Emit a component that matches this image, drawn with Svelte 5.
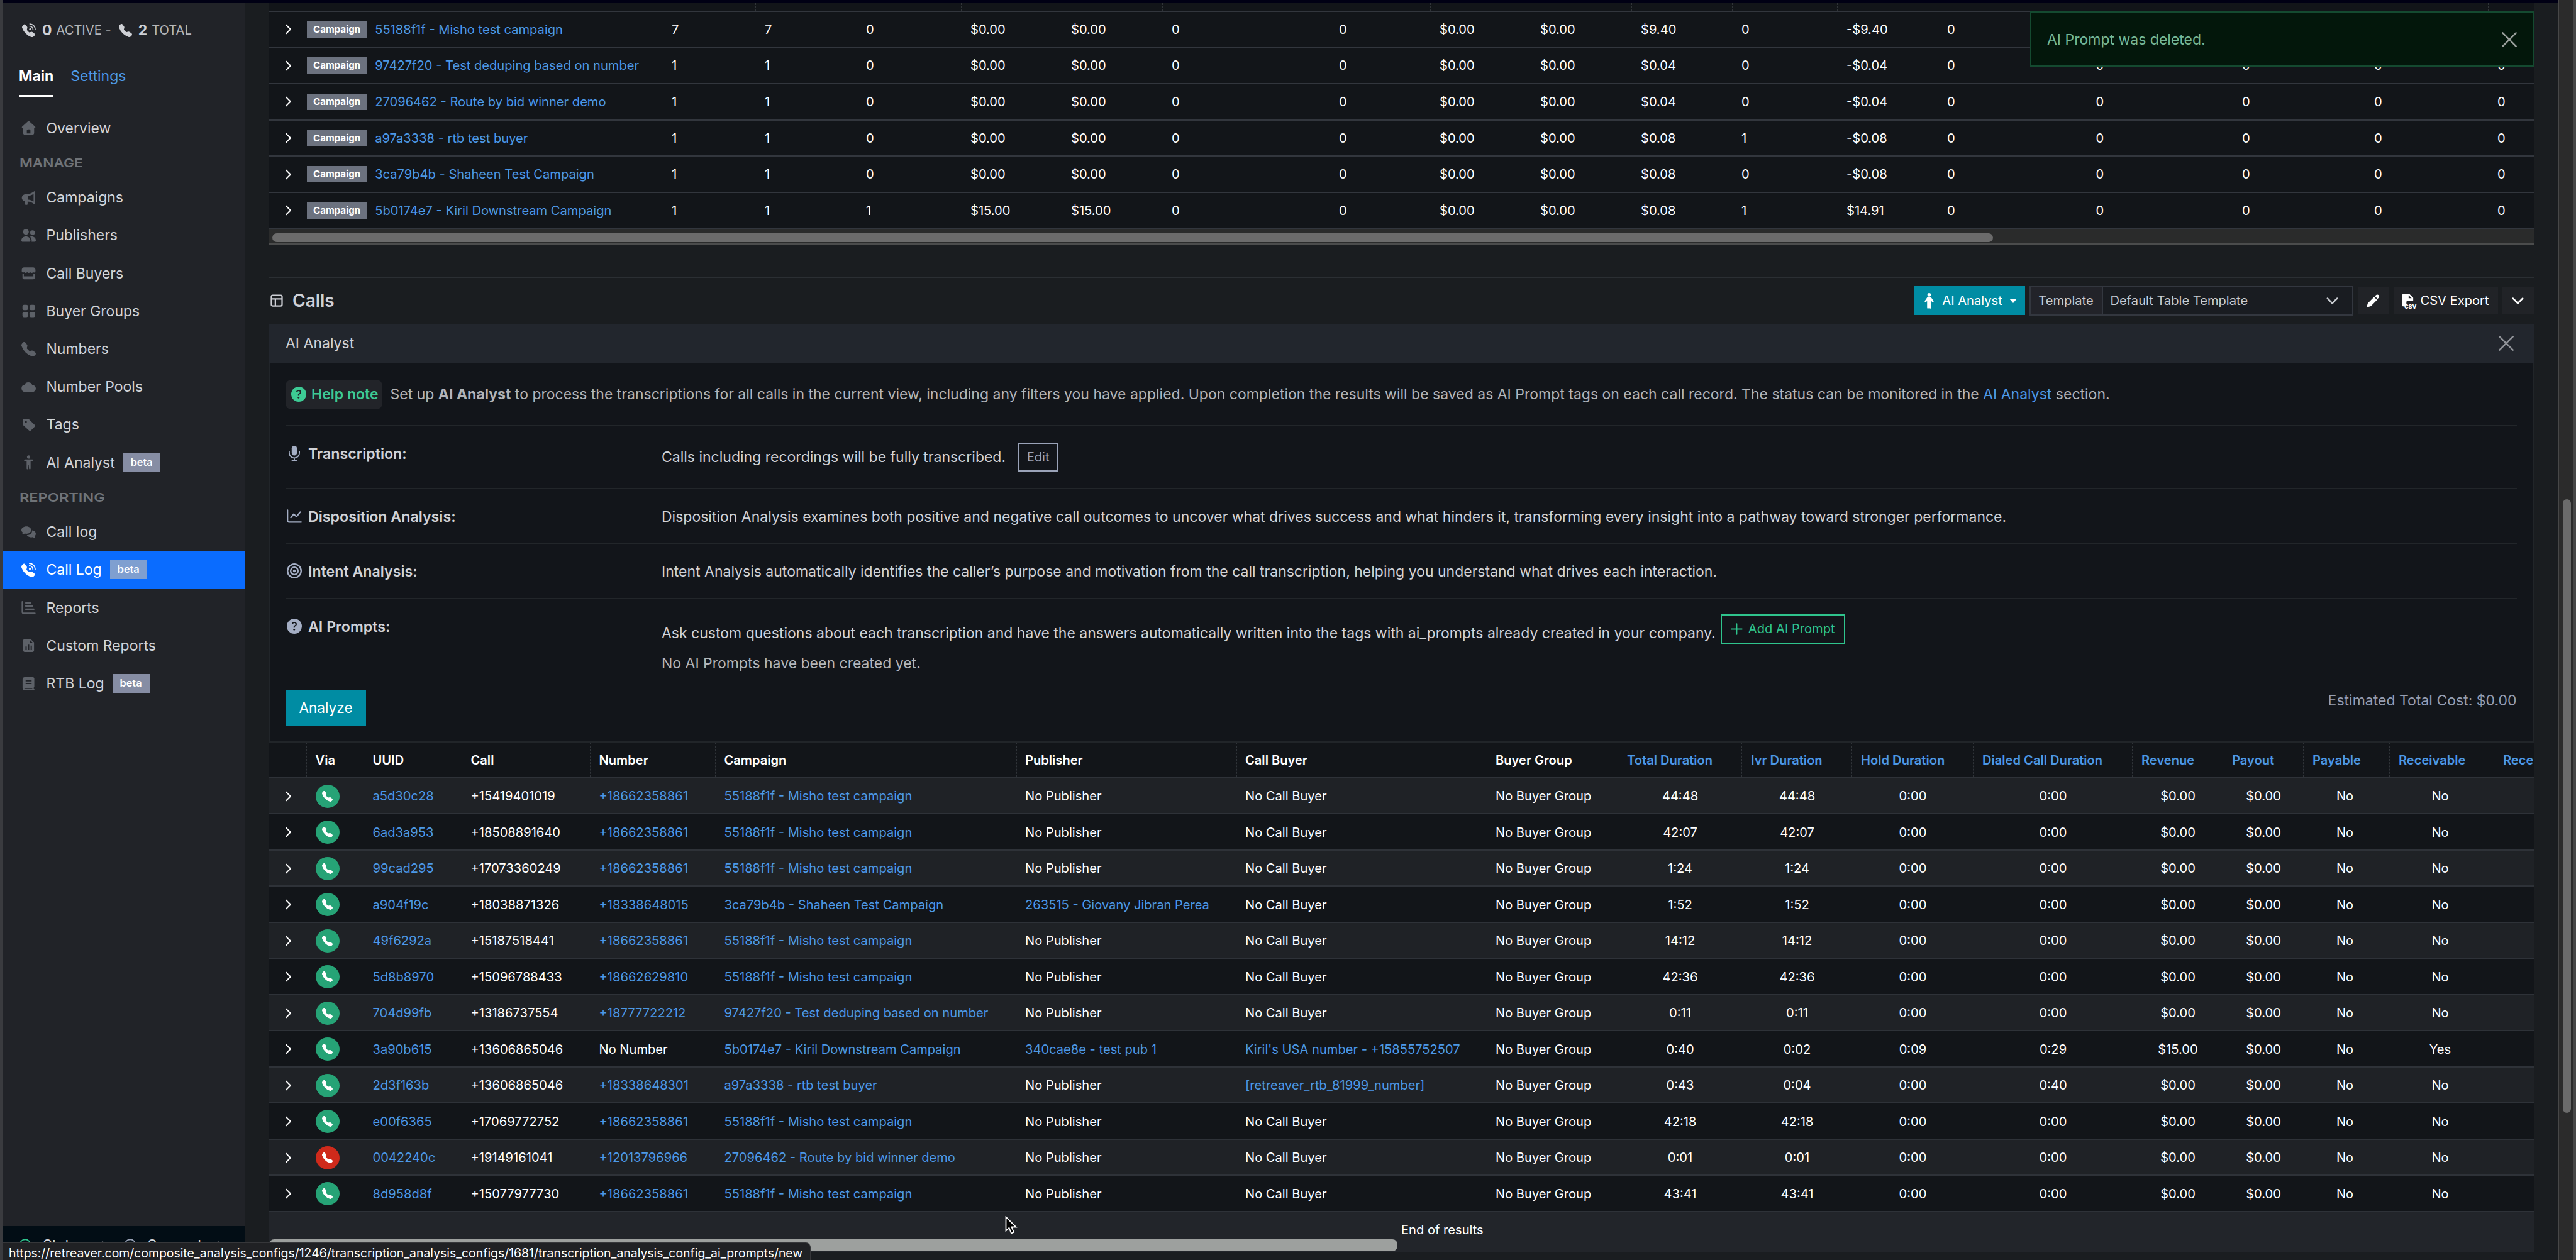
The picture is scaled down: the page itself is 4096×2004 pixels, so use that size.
<script>
  const phone = '<path d="M1.885.511a1.745 1.745 0 0 1 2.61.163L6.29 2.98c.329.423.445.974.315 1.494l-.547 2.19a.68.68 0 0 0 .178.643l2.457 2.457a.68.68 0 0 0 .644.178l2.189-.547a1.75 1.75 0 0 1 1.494.315l2.306 1.794c.829.645.905 1.87.163 2.611l-1.034 1.034c-.74.74-1.846 1.065-2.877.702a18.6 18.6 0 0 1-7.01-4.42 18.6 18.6 0 0 1-4.42-7.009c-.362-1.03-.037-2.137.703-2.877z"/>';

  // all icons are drawn on a 16x16 grid
  const icons = {
    phone,
    phoneWaves: `<g transform="translate(0 1.2) scale(.93)">${phone}</g><g fill="none" stroke="currentColor" stroke-width="1.2" stroke-linecap="round"><path d="M9 .8a6.4 6.4 0 0 1 6.3 6.3"/><path d="M8.9 3.4a3.9 3.9 0 0 1 3.8 3.8"/></g><circle cx="9.4" cy="6.8" r="1.1"/>`,
    home: '<path fill-rule="evenodd" d="M7.2.7a1.2 1.2 0 0 1 1.6 0l6.3 5.7c.8.7.3 1.9-.7 1.9h-.3v5.2c0 1.1-.8 2-1.9 2H3.8c-1.1 0-1.9-.9-1.9-2V8.3h-.3c-1 0-1.5-1.2-.7-1.9zM6 14h4v-3.2a1.3 1.3 0 0 0-1.3-1.3H7.300a1.300 1.300 0 0 0-1.300 1.300z"/>',
    megaphone: '<path fill-rule="evenodd" d="M14.700.700c.400 0 .600.300.600.700v13.200c0 .500-.600.900-1.100.600-2-1.600-3.700-2.700-7.300-3v2.700c0 .600-.400 1-1 1H5c-.500 0-.900-.400-.900-.900v-3C2.200 11.700.500 10.200.500 8s1.700-3.900 3.900-3.900c4.700 0 7.500-1.500 9.700-3.200zM13.500 3.900C11.600 5 9.700 5.700 7.500 5.900v4.200c2.200.200 4.100.900 6 2z"/>',
    people: '<circle cx="5" cy="4" r="3.200"/><circle cx="12.300" cy="4.800" r="2.600"/><path d="M0 13.500C0 10.700 2.200 9 5 9s5 1.700 5 4.500c0 .900-.600 1.500-1.500 1.500h-7C.600 15 0 14.400 0 13.500zM11.300 15c.400-2.400-.300-4.300-1.700-5.600 3.200-1 6.400.800 6.400 4.100 0 .900-.600 1.500-1.500 1.500z"/>',
    shop: '<path d="M3 1.500h10c1.500 0 2.600 1.200 2.600 2.800v1.500c0 1.300-1.700 2-2.600.9-.9 1.200-2.400 1.200-3.300 0-.9 1.200-2.400 1.200-3.300 0-.900 1.200-2.500 1.200-3.400 0C2.100 7.800.400 7.100.400 5.800V4.300C.400 2.700 1.500 1.500 3 1.500zM1.200 9h1.500v2.500h10.600V9h1.500v4c0 1-.8 1.700-1.700 1.700H2.900C2 14.700 1.200 14 1.200 13z"/>',
    grid: '<rect x="1.200" y="1.200" width="6" height="6" rx="1.600"/><rect x="9" y="1.200" width="6" height="6" rx="1.600"/><rect x="1.200" y="9" width="6" height="6" rx="1.600"/><rect x="9" y="9" width="6" height="6" rx="1.600"/>',
    cloud: '<path d="M4 13.500a4 4 0 0 1-.700-7.900A4.700 4.700 0 0 1 12 5.700a3.900 3.900 0 0 1 .200 7.800z"/>',
    tag: '<path fill-rule="evenodd" d="M1.500 3.200C1.500 2.300 2.200 1.600 3.100 1.600h4.200c.500 0 .9.200 1.200.500l6 5.900c.700.700.700 1.700 0 2.400l-3.800 3.800c-.700.700-1.700.700-2.400 0L2 8.500c-.300-.300-.500-.700-.500-1.200zM4.900 3.700a1.200 1.200 0 1 0 0 2.400 1.200 1.200 0 0 0 0-2.400z"/>',
    person: '<circle cx="8" cy="2" r="1.800"/><path d="M4 4.700h8a.9.9 0 0 1 .2 1.800l-2 .5v7.700a.9.9 0 0 1-1.800.100L8.200 10.600h-.4l-.2 4.200a.9.9 0 0 1-1.800-.100V7l-2-.5A.9.9 0 0 1 4 4.700z"/>',
    man: '<circle cx="8" cy="1.800" r="1.800"/><path d="M6.200 4.100h3.600L12.400 8a.9.900 0 0 1-1.500 1l-.8-1.100V15a.9.9 0 0 1-1.800 0v-4.300h-.6V15a.9.9 0 0 1-1.800 0V7.900L5.100 9a.9.9 0 0 1-1.500-1z"/>',
    chats: '<path d="M5.500 1.500C8.500 1.500 10.800 3.300 10.800 5.600S8.500 9.700 5.500 9.700c-.7 0-1.300-.1-1.900-.3C2.700 10.100 1.600 10.500.5 10.500c.6-.7.9-1.500 1-2.200C.6 7.600 0 6.700 0 5.600 0 3.300 2.500 1.500 5.500 1.500zM11.800 5.900C14.200 6.200 16 7.700 16 9.700c0 1-.5 1.900-1.300 2.600.1.700.4 1.500 1 2.100-1.200 0-2.300-.4-3.100-1-.500.200-1.100.300-1.800.300-2.200 0-4-1-4.800-2.500 3.400.1 6.100-2.100 5.800-5.300z"/>',
    bars: '<g fill="none" stroke="currentColor" stroke-width="1.500" stroke-linecap="round"><path d="M1 1.500v11.200c0 .900.600 1.500 1.500 1.500H15M4.800 2.800h5.700M4.800 6.200h7.700M4.800 9.700h9"/></g>',
    fileBars: '<path fill-rule="evenodd" d="M4 .7h6l4 4v8.900c0 1-.8 1.700-1.700 1.700H3.700c-1 0-1.700-.7-1.700-1.700V2.700c0-1.200.9-2 2-2zM4.500 9.200v4h1.400v-4zM7.300 7.200v6h1.400v-6zM10.200 8.200v5h1.400v-5zM9.500 2v3.200h3.200z"/>',
    journal: '<path fill-rule="evenodd" d="M3.500.7h9.300c.8 0 1.500.7 1.500 1.500v9c0 .500-.300.900-.700 1.100v1.400h.1a.8.8 0 0 1 0 1.600H3.900c-1.500 0-2.600-1.100-2.600-2.500V3c0-1.300 1-2.300 2.200-2.300zM4.700 4v1.400h6.600V4zM4.700 7v1.400h6.600V7zM3.900 12.500c-.9 0-.9 1.200 0 1.200h8.200v-1.200z"/>',
    table: '<g fill="none" stroke="currentColor" stroke-width="1.800"><rect x="1.200" y="1.200" width="13.600" height="13.600" rx="1.800"/><path d="M1.200 5.800h13.600M6.300 5.800v9"/></g>',
    question: '<path fill-rule="evenodd" d="M16 8A8 8 0 1 1 0 8a8 8 0 0 1 16 0M5.496 6.033h.825c.138 0 .248-.113.266-.250.090-.656.540-1.134 1.342-1.134.686 0 1.314.343 1.314 1.168 0 .635-.374.927-.965 1.371-.673.489-1.206 1.060-1.168 1.987l.003.217a.25.25 0 0 0 .25.246h.811a.25.25 0 0 0 .25-.25v-.105c0-.718.273-.927 1.010-1.486.609-.463 1.244-.977 1.244-2.056 0-1.511-1.276-2.241-2.673-2.241-1.267 0-2.655.590-2.750 2.286a.237.237 0 0 0 .241.247m2.325 6.443c.610 0 1.029-.394 1.029-.927 0-.552-.420-.940-1.029-.940-.584 0-1.009.388-1.009.940 0 .533.425.927 1.010.927z"/>',
    mic: '<rect x="5.200" y="0" width="5.600" height="10.300" rx="2.800"/><path fill="none" stroke="currentColor" stroke-width="1.200" stroke-linecap="round" d="M2.600 6v1.600a5.400 5.400 0 0 0 10.800 0V6M8 13v2.300M5.600 15.400h4.800"/>',
    chart: '<path fill="none" stroke="currentColor" stroke-width="1.500" stroke-linecap="round" stroke-linejoin="round" d="M.8 1.500v11c0 1.200.6 1.800 1.800 1.800h12.600M4.300 9.500l3-3.700 3 2.700 4-4.900"/>',
    target: '<g fill="none" stroke="currentColor" stroke-width="1.600"><circle cx="8" cy="8" r="7.200"/><circle cx="8" cy="8" r="3.900"/></g><circle cx="8" cy="8" r="1.500"/>',
    pencil: '<path d="M9.100 3.300l3.600 3.600-7.200 7.200c-.3.300-.6.500-1 .600L.9 15.700c-.4.100-.7-.2-.6-.6l1-3.600c.1-.400.300-.700.600-1zM10.200 2.200l1.200-1.200c1-1 2.200-.900 3.200 0 .9.900 1 2.200 0 3.200l-1.200 1.400z"/>',
    down: '<path fill="none" stroke="currentColor" stroke-width="2" stroke-linecap="round" stroke-linejoin="round" d="M2.200 5l5.800 6 5.800-6"/>',
    right: '<path fill="none" stroke="currentColor" stroke-width="1.900" stroke-linecap="round" stroke-linejoin="round" d="M4.700 1.500l6.500 6.500-6.500 6.500"/>',
    close: '<path fill="none" stroke="currentColor" stroke-width="1.700" stroke-linecap="round" d="M.9.900l14.200 14.200M15.100.900L.9 15.100"/>',
    plus: '<path fill="none" stroke="currentColor" stroke-width="1.500" stroke-linecap="round" d="M8 1v14M1 8h14"/>',
    check: '<circle cx="8" cy="8" r="7" fill="none" stroke="currentColor" stroke-width="1.500"/>',
    help: '<circle cx="8" cy="8" r="7" fill="none" stroke="currentColor" stroke-width="1.500"/><circle cx="8" cy="7" r="2.500"/>',
    file: '<path fill-rule="evenodd" d="M2 .3h6.800l4.400 4.400v3.800H6.500c-.7 0-1.200.5-1.200 1.200v5H2C1 14.700.3 14 .3 13V2C.3 1 1 .3 2 .3zM7.900 1.900v3.400h3.500z"/>',
  };

  const manage = [
    { icon: 'megaphone', label: 'Campaigns' },
    { icon: 'people', label: 'Publishers' },
    { icon: 'shop', label: 'Call Buyers' },
    { icon: 'grid', label: 'Buyer Groups' },
    { icon: 'phone', label: 'Numbers' },
    { icon: 'cloud', label: 'Number Pools' },
    { icon: 'tag', label: 'Tags' },
    { icon: 'person', label: 'AI Analyst', beta: true },
  ];

  const reporting = [
    { icon: 'chats', label: 'Call log' },
    { icon: 'phoneWaves', label: 'Call Log', beta: true, active: true },
    { icon: 'bars', label: 'Reports' },
    { icon: 'fileBars', label: 'Custom Reports' },
    { icon: 'journal', label: 'RTB Log', beta: true },
  ];

  const z = '$0.00';
  const summary = [
    ['55188f1f - Misho test campaign', 7, 7, 0, z, z, 0, 0, z, z, '$9.40', 0, '-$9.40', 0, 0, 0, 0, 0],
    ['97427f20 - Test deduping based on number', 1, 1, 0, z, z, 0, 0, z, z, '$0.04', 0, '-$0.04', 0, 0, 0, 0, 0],
    ['27096462 - Route by bid winner demo', 1, 1, 0, z, z, 0, 0, z, z, '$0.04', 0, '-$0.04', 0, 0, 0, 0, 0],
    ['a97a3338 - rtb test buyer', 1, 1, 0, z, z, 0, 0, z, z, '$0.08', 1, '-$0.08', 0, 0, 0, 0, 0],
    ['3ca79b4b - Shaheen Test Campaign', 1, 1, 0, z, z, 0, 0, z, z, '$0.08', 0, '-$0.08', 0, 0, 0, 0, 0],
    ['5b0174e7 - Kiril Downstream Campaign', 1, 1, 1, '$15.00', '$15.00', 0, 0, z, z, '$0.08', 1, '$14.91', 0, 0, 0, 0, 0],
  ];

  const columns = ['', 'Via', 'UUID', 'Call', 'Number', 'Campaign', 'Publisher', 'Call Buyer', 'Buyer Group'];
  const sortable = ['Total Duration', 'Ivr Duration', 'Hold Duration', 'Dialed Call Duration', 'Revenue', 'Payout', 'Payable', 'Receivable', 'Rece'];

  const misho = '55188f1f - Misho test campaign';
  const main = '+18662358861';

  function call(uuid, from, number, campaign, total, ivr, rest = {}) {
    return { uuid, from, number, campaign, total, ivr, hold: '0:00', dialed: '0:00', revenue: z, receivable: 'No', ...rest };
  }

  const calls = [
    call('a5d30c28', '+15419401019', main, misho, '44:48', '44:48'),
    call('6ad3a953', '+18508891640', main, misho, '42:07', '42:07'),
    call('99cad295', '+17073360249', main, misho, '1:24', '1:24'),
    call('a904f19c', '+18038871326', '+18338648015', '3ca79b4b - Shaheen Test Campaign', '1:52', '1:52', { publisher: '263515 - Giovany Jibran Perea' }),
    call('49f6292a', '+15187518441', main, misho, '14:12', '14:12'),
    call('5d8b8970', '+15096788433', '+18662629810', misho, '42:36', '42:36'),
    call('704d99fb', '+13186737554', '+18777722212', '97427f20 - Test deduping based on number', '0:11', '0:11'),
    call('3a90b615', '+13606865046', '', '5b0174e7 - Kiril Downstream Campaign', '0:40', '0:02', {
      publisher: '340cae8e - test pub 1', buyer: "Kiril's USA number - +15855752507", hold: '0:09', dialed: '0:29', revenue: '$15.00', receivable: 'Yes',
    }),
    call('2d3f163b', '+13606865046', '+18338648301', 'a97a3338 - rtb test buyer', '0:43', '0:04', { buyer: '[retreaver_rtb_81999_number]', dialed: '0:40' }),
    call('e00f6365', '+17069772752', main, misho, '42:18', '42:18'),
    call('0042240c', '+19149161041', '+12013796966', '27096462 - Route by bid winner demo', '0:01', '0:01', { failed: true }),
    call('8d958d8f', '+15077977730', main, misho, '43:41', '43:41'),
  ];
</script>

{#snippet icon(name, size = 22)}
  <svg class="icon" width={size} height={size} viewBox="0 0 16 16" fill="currentColor">{@html icons[name]}</svg>
{/snippet}

{#snippet navItem(item)}
  <a class="nav-item" class:active={item.active} href="#top">
    <span class="nav-icon">{@render icon(item.icon, 23)}</span>
    <span>{item.label}</span>
    {#if item.beta}<span class="beta">beta</span>{/if}
  </a>
{/snippet}

{#snippet cell(value, fallback)}
  {#if value}<a href="#top">{value}</a>{:else}<span>{fallback}</span>{/if}
{/snippet}

<div class="window">
  <div class="page">
    <div class="topbar"></div>
    <div class="body">
      <aside>
        <div class="stats">
          {@render icon('phoneWaves', 22)}<b>0</b> <span>ACTIVE -</span>
          <i></i>{@render icon('phone', 21)}<b>2</b> <span>TOTAL</span>
        </div>
        <div class="tabs">
          <span class="tab current">Main</span>
          <span class="tab">Settings</span>
        </div>
        <nav>
          {@render navItem({ icon: 'home', label: 'Overview' })}
          <div class="heading"><span>MANAGE</span></div>
          {#each manage as item}{@render navItem(item)}{/each}
          <div class="heading"><span class="wide">REPORTING</span></div>
          {#each reporting as item}{@render navItem(item)}{/each}
        </nav>
        <div class="side-footer">
          <span class="ok">{@render icon('check', 20)}</span><span>Status</span><span class="arrow">{@render icon('right', 12)}</span>
          <span class="info">{@render icon('help', 20)}</span><span>Support</span><span class="arrow">{@render icon('right', 12)}</span>
        </div>
      </aside>

      <main>
        <section class="summary">
          <div class="summary-row summary-head">
            {#each summary[0] as _}<div></div>{/each}
          </div>
          {#each summary as row}
            <div class="summary-row">
              <div class="first">
                {@render icon('right', 17)}
                <span class="tag">Campaign</span>
                <a href="#top">{row[0]}</a>
              </div>
              {#each row.slice(1) as value}<div>{value}</div>{/each}
            </div>
          {/each}
          <div class="track"><div class="thumb"></div></div>
        </section>

        <section class="toolbar">
          <h2>{@render icon('table', 20)}Calls</h2>
          <div class="tools">
            <button class="primary analyst">{@render icon('man', 25)}<span>AI Analyst</span><span class="caret"></span></button>
            <div class="template">
              <label for="tpl">Template</label>
              <div class="select" id="tpl"><span>Default Table Template</span>{@render icon('down', 21)}</div>
            </div>
            <button class="dark pen">{@render icon('pencil', 21)}</button>
            <button class="dark csv">
              <span class="csv-icon">{@render icon('file', 22)}<small>CSV</small></span>CSV Export
            </button>
            <button class="dark more">{@render icon('down', 21)}</button>
          </div>
        </section>

        <section class="panel">
          <header><span>AI Analyst</span>{@render icon('close', 24)}</header>
          <div class="panel-body">
            <div class="row help">
              <span class="note">{@render icon('question', 24)}Help note</span>
              <p>
                Set up <b>AI Analyst</b> to process the transcriptions for all calls in the current view, including any filters you have applied. Upon completion the results will be saved as AI Prompt tags on each call record. The status can be monitored in the <a href="#top">AI Analyst</a> section.
              </p>
            </div>
            <div class="row transcription">
              <div class="label">{@render icon('mic', 24)}Transcription:</div>
              <div class="desc"><span>Calls including recordings will be fully transcribed.</span><button class="edit">Edit</button></div>
            </div>
            <div class="row">
              <div class="label">{@render icon('chart', 24)}Disposition Analysis:</div>
              <div class="desc">Disposition Analysis examines both positive and negative call outcomes to uncover what drives success and what hinders it, transforming every insight into a pathway toward stronger performance.</div>
            </div>
            <div class="row">
              <div class="label">{@render icon('target', 24)}Intent Analysis:</div>
              <div class="desc">Intent Analysis automatically identifies the caller’s purpose and motivation from the call transcription, helping you understand what drives each interaction.</div>
            </div>
            <div class="row prompts">
              <div class="label">{@render icon('question', 24)}AI Prompts:</div>
              <div>
                <div class="desc">
                  <span class="ask">Ask custom questions about each transcription and have the answers automatically written into the tags with ai_prompts already created in your company.</span>
                  <button class="add">{@render icon('plus', 19)}Add AI Prompt</button>
                </div>
                <div class="none">No AI Prompts have been created yet.</div>
              </div>
            </div>
            <div class="actions">
              <button class="primary analyze">Analyze</button>
              <span class="cost">Estimated Total Cost: $0.00</span>
            </div>
          </div>
        </section>

        <section class="calls">
          <div class="call-row call-head">
            {#each columns as name}<div>{name}</div>{/each}
            {#each sortable as name}<div class="sort">{name}</div>{/each}
          </div>
          {#each calls as c}
            <div class="call-row">
              <div class="expand">{@render icon('right', 17)}</div>
              <div><span class="via" class:failed={c.failed}>{@render icon('phone', 17)}</span></div>
              <div><a href="#top">{c.uuid}</a></div>
              <div>{c.from}</div>
              <div>{@render cell(c.number, 'No Number')}</div>
              <div><a href="#top">{c.campaign}</a></div>
              <div>{@render cell(c.publisher, 'No Publisher')}</div>
              <div>{@render cell(c.buyer, 'No Call Buyer')}</div>
              <div>No Buyer Group</div>
              <div class="mid">{c.total}</div>
              <div class="mid">{c.ivr}</div>
              <div class="mid">{c.hold}</div>
              <div class="mid">{c.dialed}</div>
              <div class="mid">{c.revenue}</div>
              <div class="mid">{z}</div>
              <div class="mid nudge">No</div>
              <div class="mid nudge">{c.receivable}</div>
              <div></div>
            </div>
          {/each}
          <div class="end">End of results</div>
          <div class="track light"><div class="thumb"></div></div>
        </section>
      </main>
    </div>
  </div>
  <div class="scrollbar"><div></div></div>

  <div class="toast"><span>AI Prompt was deleted.</span>{@render icon('close', 24)}</div>
  <div class="status">https://retreaver.com/composite_analysis_configs/1246/transcription_analysis_configs/1681/transcription_analysis_config_ai_prompts/new</div>
  <svg class="cursor" width="20" height="30" viewBox="0 0 20 30"><path d="M1.500 1.500v22l5-4.600 3.500 8.600 4-1.700-3.500-8.300h7z" fill="#000" stroke="#fff" stroke-width="1.800" /></svg>
</div>

<style>
  :global(body) {
    margin: 0;
    background: #1a1d20;
  }
  .window {
    position: relative;
    display: flex;
    box-sizing: border-box;
    width: 4096px;
    height: 2004px;
    padding-left: 5px;
    overflow: hidden;
    background: #3a3b3f;
    color: #fff;
    font-family: Inter, 'Liberation Sans', sans-serif;
    font-size: 23px;
    line-height: 34px;
    white-space: nowrap;
  }
  .window * {
    box-sizing: border-box;
  }
  a {
    color: #4c98e6;
    text-decoration: none;
  }
  button {
    display: flex;
    align-items: center;
    justify-content: center;
    border: 0;
    padding: 0;
    font: inherit;
    font-size: 20.125px;
    color: #fff;
  }
  p, h2 {
    margin: 0;
  }
  .icon {
    display: block;
    flex: none;
  }
  .page {
    display: flex;
    flex-direction: column;
    width: 4062px;
    background: #1a1d20;
  }
  .topbar {
    flex: none;
    height: 5px;
    background: #000014;
  }
  .body {
    display: flex;
    flex: 1;
    min-height: 0;
  }

  /* sidebar */
  aside {
    display: flex;
    flex-direction: column;
    width: 384px;
    background: #212328;
    color: #d2d4d9;
  }
  .stats {
    display: flex;
    align-items: center;
    height: 86px;
    padding-left: 30px;
    font-size: 20.125px;
    color: #b4b6ba;
  }
  .stats .icon {
    color: #ced0d5;
  }
  .stats b {
    margin: 0 7px 0 10px;
    font-size: 23px;
    color: #ced0d5;
  }
  .stats i {
    width: 12px;
  }
  .tabs {
    display: flex;
    gap: 27px;
    height: 63px;
    padding-left: 25px;
  }
  .tab {
    display: flex;
    align-items: center;
    border-bottom: 3px solid transparent;
    color: #4c98e6;
  }
  .tab.current {
    border-color: #fff;
    color: #fff;
    font-weight: 700;
  }
  nav {
    padding-top: 19px;
  }
  .heading {
    display: flex;
    align-items: center;
    height: 50.5px;
    padding: 1px 0 0 26px;
    font-size: 18.400px;
    font-weight: 600;
    color: #6f7378;
  }
  .heading span {
    transform: scaleX(1.230);
    transform-origin: left;
  }
  .heading .wide {
    transform: scaleX(1.280);
  }
  .nav-item {
    display: flex;
    align-items: center;
    height: 60.2px;
    padding: 1px 0 0 29px;
    color: #d2d4d9;
  }
  .nav-icon {
    width: 39.500px;
    color: #5d6168;
  }
  .nav-item.active, .nav-item.active .nav-icon {
    color: #fff;
  }
  .nav-item.active {
    background: #0a6cff;
  }
  .beta {
    height: 30px;
    margin-left: 13px;
    padding: 0 12px;
    background: #868da4;
    color: #fff;
    font-size: 16.300px;
    font-weight: 600;
    line-height: 28px;
  }
  .active .beta {
    background: #7f9fd0;
  }
  .side-footer {
    display: flex;
    align-items: flex-start;
    height: 54px;
    margin-top: auto;
    padding: 13px 0 0 25px;
    background: #020d15;
  }
  .side-footer .icon {
    margin-top: 7px;
  }
  .ok {
    width: 38px;
    color: #2fc48d;
  }
  .info {
    width: 38px;
    margin-left: 26px;
    color: #9aa3b8;
  }
  .arrow {
    margin: 3px 0 0 22px;
    color: #4a4e55;
  }

  /* main column */
  main {
    width: 3600.500px;
    margin-left: 39px;
    font-size: 20.125px;
  }
  .summary-row {
    display: grid;
    grid-template-columns: 626px 148px 161px 166px 160px 160px 266px 160px 160px 160px 160px 167px 160px 236.500px 232.500px 210px 196px 1fr;
    height: 57.600px;
    border-bottom: 2px solid #32363d;
    background: #121519;
  }
  .summary-row > div {
    display: flex;
    align-items: center;
    padding-left: 14px;
  }
  .summary-head {
    height: 14px;
  }
  .summary-head > div {
    border-right: 1px dashed #303438;
  }
  .summary-head > div:first-child, .summary-head > div:last-child {
    border: 0;
  }
  .summary-row .first {
    padding-left: 22px;
  }
  .tag {
    height: 26px;
    margin: 0 13px 0 21px;
    padding: 0 10px;
    background: #6c727f;
    font-size: 15.100px;
    font-weight: 700;
    line-height: 26px;
  }
  .track {
    height: 24px;
    padding: 6px 5px;
    border-bottom: 2px solid #4b4c4c;
    background: #2a2b2b;
  }
  .thumb {
    width: 2736px;
    height: 14px;
    border-radius: 7px;
    background: #6b6b6b;
  }

  .toolbar {
    display: flex;
    align-items: center;
    justify-content: space-between;
    height: 75px;
    margin-top: 51px;
    border-top: 2px solid #2b2f33;
  }
  h2 {
    display: flex;
    align-items: center;
    gap: 15px;
    padding-left: 2px;
    color: #ced0d5;
    font-size: 28px;
    font-weight: 600;
  }
  .tools {
    display: flex;
    align-items: center;
    gap: 7px;
  }
  .primary {
    background: #008ca3;
  }
  .analyst {
    width: 177px;
    height: 46px;
    gap: 8px;
  }
  .caret {
    margin-left: 3px;
    border: 6px solid transparent;
    border-top: 7px solid #fff;
    border-bottom: 0;
  }
  .template {
    display: flex;
    height: 47px;
    border: 2px solid #33373f;
    color: #c8cbd0;
  }
  .template label {
    width: 115px;
    border-right: 2px solid #33373f;
    background: #222329;
    line-height: 43px;
    text-align: center;
  }
  .select {
    display: flex;
    align-items: center;
    justify-content: space-between;
    width: 396px;
    padding: 0 21px 0 12px;
    background: #191c21;
  }
  .dark {
    height: 44px;
    background: #212327;
  }
  .pen {
    width: 50px;
  }
  .csv {
    width: 166px;
    gap: 7px;
  }
  .csv-icon {
    position: relative;
  }
  .csv-icon small {
    position: absolute;
    right: -1px;
    bottom: -3px;
    font-size: 9px;
    font-weight: 800;
    line-height: 9px;
  }
  .more {
    width: 50px;
  }

  .panel {
    color: #d0d2d7;
    font-size: 23px;
  }
  .panel header {
    display: flex;
    align-items: center;
    justify-content: space-between;
    height: 62px;
    padding: 1px 32px 0 26px;
    background: #22262d;
  }
  .panel header .icon {
    color: #8f9297;
  }
  .panel-body {
    height: 604px;
    padding: 0 25px 0 24px;
    border: solid #212529;
    border-width: 0 2px 2px;
    background: #12151a;
  }
  .row {
    display: flex;
    height: 87.500px;
    padding-top: 27px;
    border-bottom: 2px solid #22262a;
  }
  .label {
    display: flex;
    gap: 10px;
    width: 598px;
    font-size: 23.200px;
    font-weight: 600;
  }
  .label .icon {
    margin: 4px 0 0 2px;
    color: #a4aec4;
  }
  .help {
    align-items: center;
    height: 101.500px;
    padding-top: 2px;
    color: #b2b4b8;
  }
  .note {
    display: flex;
    align-items: center;
    gap: 8px;
    height: 47px;
    margin-right: 13px;
    padding: 0 6px 0 9px;
    border-radius: 9px;
    background: #222429;
    color: #3dca94;
    font-weight: 600;
  }
  .transcription {
    height: 99.500px;
  }
  .transcription .desc {
    display: flex;
    align-items: center;
    height: 46px;
    margin-top: -1px;
  }
  .edit {
    width: 65px;
    height: 46px;
    margin-left: 19px;
    border: 2px solid #9aa3b8;
    background: none;
    color: #9aa3b8;
  }
  .prompts {
    height: 144px;
    border: 0;
  }
  .prompts .desc {
    display: flex;
    margin-top: -3px;
  }
  .ask {
    padding-top: 13px;
  }
  .add {
    width: 198px;
    height: 47px;
    margin-left: 8px;
    gap: 9px;
    border: 2px solid #2fc48d;
    background: none;
    color: #2fc48d;
  }
  .none {
    margin-top: 14px;
    color: #b3b5b9;
  }
  .actions {
    display: flex;
    justify-content: space-between;
  }
  .analyze {
    width: 128px;
    height: 58px;
    font-size: 22.600px;
  }
  .cost {
    color: #959db1;
  }

  .call-row {
    display: grid;
    grid-template-columns: 60px 91px 156px 204px 199px 478.500px 350px 398px 208.500px 197px 175px 193px 253px 144px 128px 137px 166px 1fr;
    height: 57.530px;
    border-bottom: 2px solid #2e3238;
    background: #121519;
  }
  .call-row:nth-child(even) {
    background: #1f2226;
  }
  .call-row > div {
    display: flex;
    align-items: center;
    padding: 2px 0 0 13.500px;
    overflow: hidden;
  }
  .call-head {
    height: 57px;
    font-weight: 600;
  }
  .call-head > div {
    border-right: 1px dashed #303439;
  }
  .call-head > div:last-child {
    border: 0;
  }
  .call-row .sort {
    padding-left: 14px;
    color: #4c98e6;
  }
  .call-row .expand {
    padding-left: 22px;
  }
  .call-row .mid {
    justify-content: center;
    padding-left: 0;
  }
  .call-row .nudge {
    padding-right: 6px;
  }
  .via {
    display: flex;
    align-items: center;
    justify-content: center;
    width: 38px;
    height: 37px;
    border-radius: 50%;
    background: #26a376;
  }
  .via.failed {
    background: #cf2a1b;
  }
  .end {
    height: 43px;
    padding: 11px 0 0 1800px;
    background: #22252a;
  }
  .light {
    height: 20px;
    padding: 0;
    border: 0;
    background: #22252a;
  }
  .light .thumb {
    width: 1794px;
    height: 19px;
    border-radius: 8px;
    background: #9da09e;
  }

  .scrollbar {
    width: 29px;
    padding: 794px 0 0 6px;
    border: solid #474747;
    border-width: 0 5px 0 2px;
    background: #2b2b2b;
  }
  .scrollbar div {
    width: 13px;
    height: 976px;
    border-radius: 7px;
    background: #6b6b6b;
  }

  .toast {
    position: absolute;
    top: 18px;
    left: 3228px;
    display: flex;
    align-items: center;
    justify-content: space-between;
    width: 801px;
    height: 88px;
    padding: 2px 25px 0;
    border: 2px solid #144a30;
    background: #03170b;
    color: #75b798;
  }
  .toast .icon {
    color: #9a9f9c;
  }
  .status {
    position: absolute;
    left: 4px;
    bottom: 0;
    height: 28px;
    padding: 6px 12px 0 9px;
    border: 1px solid #36373a;
    border-bottom: 0;
    border-top-right-radius: 8px;
    background: #202124;
    font-size: 19.400px;
    line-height: 20px;
  }
  .cursor {
    position: absolute;
    left: 1598px;
    top: 1934px;
  }
</style>
